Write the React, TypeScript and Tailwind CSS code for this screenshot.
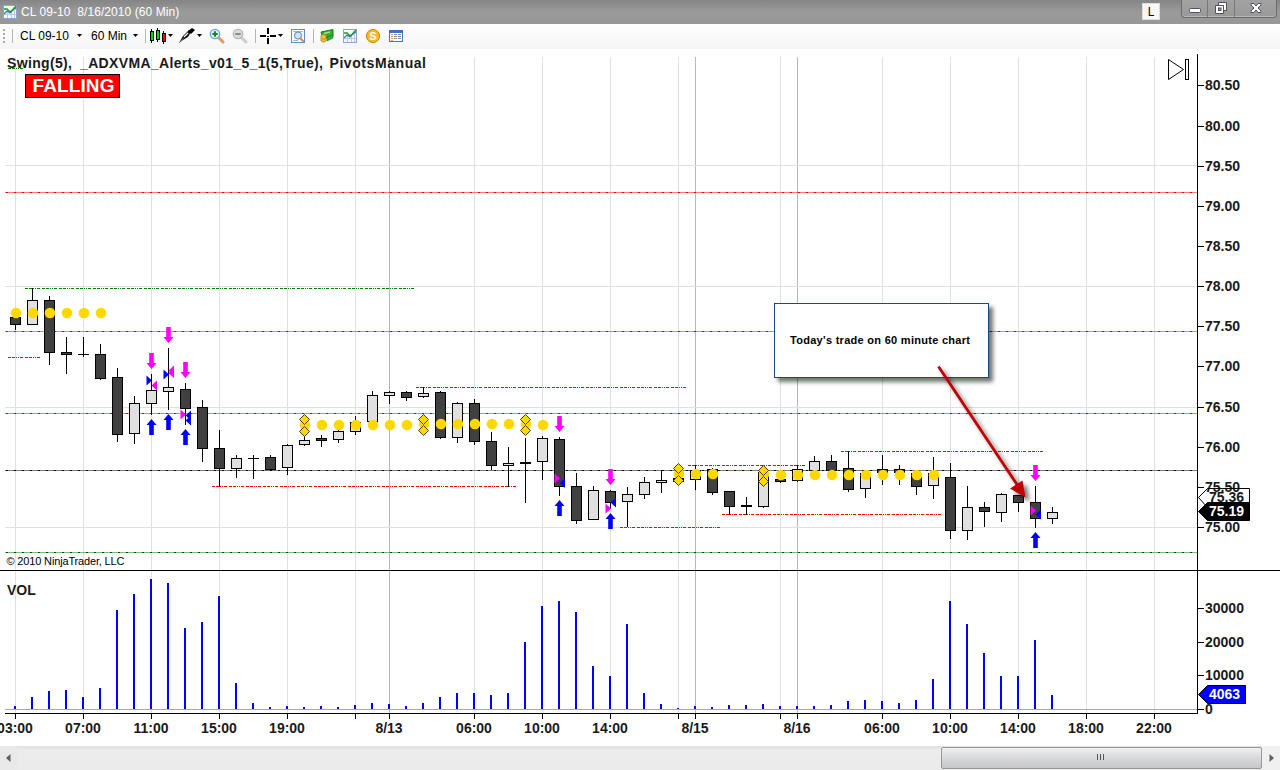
import type { ReactNode } from 'react';

type Bar = [high: number, top: number, bottom: number, low: number, up: 0 | 1, volTop: number];

// one entry per hourly bar, in chart pixels
const bars: Bar[] = [
  [317, 317, 325, 330, 0, 706],
  [288, 300, 325, 325, 1, 697],
  [296, 300, 353, 365, 0, 691],
  [337, 352, 355, 374, 0, 690],
  [337, 354, 355, 357, 0, 697],
  [344, 354, 379, 380, 0, 688],
  [368, 377, 435, 442, 0, 610],
  [396, 403, 434, 444, 1, 594],
  [374, 390, 404, 415, 1, 579],
  [348, 387, 392, 410, 1, 583],
  [383, 389, 409, 425, 0, 628],
  [400, 407, 449, 462, 0, 622],
  [430, 448, 469, 487, 0, 596],
  [455, 458, 469, 478, 1, 683],
  [455, 458, 459, 479, 0, 703],
  [455, 457, 470, 470, 0, 707],
  [444, 445, 468, 475, 1, 706],
  [430, 440, 445, 446, 1, 707],
  [435, 438, 441, 447, 0, 706],
  [430, 431, 440, 443, 1, 707],
  [416, 422, 432, 435, 1, 705],
  [391, 395, 422, 422, 1, 703],
  [391, 392, 396, 404, 1, 704],
  [391, 392, 398, 401, 0, 706],
  [387, 393, 397, 398, 1, 703],
  [391, 392, 438, 439, 0, 697],
  [402, 403, 438, 443, 1, 693],
  [399, 403, 442, 445, 0, 693],
  [432, 441, 466, 470, 0, 695],
  [447, 463, 466, 487, 1, 693],
  [438, 462, 464, 503, 0, 642],
  [436, 438, 462, 480, 1, 606],
  [437, 439, 487, 496, 0, 601],
  [473, 486, 521, 524, 0, 612],
  [486, 490, 520, 520, 1, 666],
  [490, 491, 503, 509, 0, 676],
  [487, 494, 502, 527, 1, 624],
  [477, 482, 495, 499, 1, 693],
  [470, 480, 483, 493, 1, 704],
  [470, 478, 482, 482, 0, 708],
  [465, 470, 480, 490, 1, 706],
  [468, 469, 493, 495, 0, 707],
  [491, 491, 507, 515, 0, 705],
  [497, 505, 507, 515, 0, 705],
  [466, 472, 507, 508, 1, 704],
  [475, 479, 482, 483, 0, 706],
  [465, 469, 481, 482, 1, 706],
  [456, 461, 471, 471, 1, 706],
  [455, 461, 471, 471, 0, 705],
  [451, 468, 490, 492, 0, 701],
  [472, 473, 489, 498, 1, 700],
  [455, 469, 473, 485, 0, 701],
  [465, 469, 473, 485, 0, 703],
  [470, 473, 487, 495, 0, 700],
  [457, 473, 486, 499, 1, 679],
  [463, 477, 531, 539, 0, 601],
  [486, 507, 531, 540, 1, 624],
  [502, 507, 512, 527, 0, 653],
  [493, 494, 513, 522, 1, 676],
  [495, 495, 503, 512, 0, 676],
  [486, 502, 519, 528, 0, 640],
  [507, 512, 519, 524, 1, 695],
];

const barX = (i: number) => 15 + 17 * i;

const timeLabels = [
  { x: 15, text: '03:00' },
  { x: 83, text: '07:00' },
  { x: 151, text: '11:00' },
  { x: 219, text: '15:00' },
  { x: 287, text: '19:00' },
  { x: 355, text: '' },
  { x: 389, text: '8/13', session: true },
  { x: 474, text: '06:00' },
  { x: 542, text: '10:00' },
  { x: 610, text: '14:00' },
  { x: 678, text: '' },
  { x: 695, text: '8/15', session: true },
  { x: 780, text: '' },
  { x: 797, text: '8/16', session: true },
  { x: 882, text: '06:00' },
  { x: 950, text: '10:00' },
  { x: 1018, text: '14:00' },
  { x: 1086, text: '18:00' },
  { x: 1154, text: '22:00' },
];

const prices = [80.5, 80, 79.5, 79, 78.5, 78, 77.5, 77, 76.5, 76, 75.5, 75];
const priceY = (price: number) => Math.round(527 - (price - 75) * 80.3);

const volumes = [
  { y: 608, text: '30000' },
  { y: 642, text: '20000' },
  { y: 675, text: '10000' },
  { y: 709, text: '0' },
];

const pivots = [
  { y: 192, color: '#ff0000', dash: '#ee0000' },
  { y: 331, color: '#ff0000', dash: '#c80000' },
  { y: 413, color: '#ff0000', dash: '#c80000' },
  { y: 470, color: '#000000', dash: '#000000' },
  { y: 552, color: '#008000', dash: '#005000' },
];

const swings = [
  { x1: 8, x2: 24, y: 68, color: '#008000' },
  { x1: 25, x2: 414, y: 288, color: '#008000' },
  { x1: 8, x2: 40, y: 357, color: '#ff0000' },
  { x1: 212, x2: 516, y: 486, color: '#ff0000' },
  { x1: 416, x2: 686, y: 387, color: '#008000' },
  { x1: 620, x2: 720, y: 527, color: '#ff0000' },
  { x1: 688, x2: 805, y: 465, color: '#008000' },
  { x1: 722, x2: 941, y: 514, color: '#ff0000' },
  { x1: 841, x2: 1043, y: 451, color: '#008000' },
];

const dots = [
  { from: 0, to: 5, y: 313 },
  { from: 17, to: 23, y: 425 },
  { from: 24, to: 30, y: 424 },
  { from: 31, to: 31, y: 425 },
  { from: 39, to: 41, y: 474 },
  { from: 44, to: 44, y: 474 },
  { from: 45, to: 54, y: 475 },
];

const diamonds = [
  [17, 419.5],
  [17, 431.5],
  [24, 419.5],
  [24, 430.5],
  [30, 419.5],
  [30, 430.5],
  [39, 468.5],
  [39, 480.5],
  [44, 470.5],
  [44, 481.5],
];

const signals = [
  { bar: 8, down: 353, up: 419 },
  { bar: 9, down: 327, up: 414 },
  { bar: 10, down: 362, up: 429 },
  { bar: 32, down: 416, up: 500 },
  { bar: 35, down: 469, up: 513 },
  { bar: 60, down: 465, up: 532 },
];

const fills = [
  { bar: 8, y: 380.5, side: 'entry', color: '#0000ff' },
  { bar: 8, y: 385.5, side: 'exit', color: '#ff00ff' },
  { bar: 9, y: 374.5, side: 'entry', color: '#0000ff' },
  { bar: 9, y: 370.5, side: 'exit', color: '#ff00ff' },
  { bar: 9, y: 373, side: 'exit', color: '#ff00ff' },
  { bar: 10, y: 414.5, side: 'entry', color: '#ff00ff' },
  { bar: 10, y: 415.5, side: 'exit', color: '#0000ff' },
  { bar: 10, y: 420.5, side: 'exit', color: '#0000ff' },
  { bar: 32, y: 478.5, side: 'entry', color: '#ff00ff' },
  { bar: 32, y: 483, side: 'exit', color: '#0000ff' },
  { bar: 35, y: 508.5, side: 'entry', color: '#ff00ff' },
  { bar: 35, y: 502.5, side: 'exit', color: '#0000ff' },
  { bar: 60, y: 510.5, side: 'entry', color: '#ff00ff' },
  { bar: 60, y: 514.5, side: 'exit', color: '#0000ff' },
];

const Grid = () => (
  <g shapeRendering="crispEdges">
    {timeLabels.map(({ x, session }) => (
      <rect key={x} x={x} y={57} width={1} height={656} fill={session ? '#b8b8b8' : '#e0e0e0'} />
    ))}
    {[165, 286, 407, 527].map(y => (
      <rect key={y} x={5} y={y} width={1192} height={1} fill="#e0e0e0" />
    ))}
  </g>
);

const Levels = () => (
  <g shapeRendering="crispEdges">
    {pivots.map(({ y, color, dash }) => (
      <g key={y}>
        <line x1={5} x2={1197} y1={y + 0.5} y2={y + 0.5} stroke={color} strokeOpacity={0.52} />
        <line x1={6} x2={1197} y1={y + 0.5} y2={y + 0.5} stroke={dash} strokeDasharray="2 6" />
      </g>
    ))}
    {swings.map(({ x1, x2, y, color }) => (
      <line
        key={`${x1}-${y}`}
        x1={x1}
        x2={x2}
        y1={y + 0.5}
        y2={y + 0.5}
        stroke={color}
        strokeDasharray="3 1 3 1 1 1 1 1 3 2"
      />
    ))}
  </g>
);

const Candles = () => (
  <g shapeRendering="crispEdges">
    {bars.map(([high, top, bottom, low, up, volTop], i) => {
      const x = barX(i);
      const height = bottom - top;
      return (
        <g key={i}>
          <rect x={x} y={high} width={1} height={low - high} fill="#000" />
          <rect x={x - 5} y={top} width={11} height={height} fill="#000" />
          {height > 2 && (
            <rect x={x - 4} y={top + 1} width={9} height={height - 2} fill={up ? '#e0e0e0' : '#404040'} />
          )}
          <rect x={x - 1} y={volTop} width={2} height={709 - volTop} fill="#0000ff" />
        </g>
      );
    })}
  </g>
);

const Markers = () => (
  <g>
    {dots.flatMap(({ from, to, y }) =>
      Array.from({ length: to - from + 1 }, (_, k) => (
        <circle key={from + k} cx={barX(from + k) + 1} cy={y} r={5.3} fill="#ffd800" />
      )),
    )}
    {diamonds.map(([bar, y]) => (
      <path
        key={`${bar}-${y}`}
        d="M0 -5L5 0L0 5L-5 0Z"
        transform={`translate(${barX(bar) + 0.5} ${y})`}
        fill="#ffd800"
        stroke="#4d4100"
      />
    ))}
    {fills.map(({ bar, y, side, color }) => (
      <path
        key={`${bar}-${y}`}
        d={side === 'entry' ? 'M-5 -5L0.5 0L-5 5Z' : 'M5.5 -5L0 0L5.5 5Z'}
        transform={`translate(${barX(bar) + 0.5} ${y})`}
        fill={color}
      />
    ))}
    {signals.map(({ bar, down, up }) => (
      <g key={bar}>
        <path
          d="M-2.3 0H2.3V10H5L0 16L-5 10H-2.3Z"
          transform={`translate(${barX(bar) + 0.5} ${down})`}
          fill="#ff00ff"
        />
        <path
          d="M-2.3 16H2.3V6H5L0 0L-5 6H-2.3Z"
          transform={`translate(${barX(bar) + 0.5} ${up})`}
          fill="#0000ff"
        />
      </g>
    ))}
  </g>
);

const Axes = () => (
  <g className="text-[14px] font-bold" fill="#1a1a1a">
    <g shapeRendering="crispEdges" fill="#000">
      <rect x={5} y={709} width={1192} height={1} fill="#a9a9a9" />
      <rect x={0} y={570} width={1280} height={1} />
      <rect x={5} y={713} width={1193} height={1} />
      <rect x={1197} y={54} width={1} height={660} />
      {timeLabels.map(({ x }) => (
        <rect key={x} x={x} y={714} width={1} height={5} />
      ))}
      {prices.map(price => (
        <rect key={price} x={1198} y={priceY(price)} width={6} height={1} />
      ))}
      {volumes.map(({ y }) => (
        <rect key={y} x={1198} y={y} width={6} height={1} />
      ))}
    </g>
    {timeLabels.map(({ x, text }) => (
      <text key={x} x={x} y={733} textAnchor="middle">{text}</text>
    ))}
    {prices.map(price => (
      <text key={price} x={1205} y={priceY(price) + 5}>{price.toFixed(2)}</text>
    ))}
    {volumes.map(({ y, text }) => (
      <text key={y} x={1205} y={y + 5}>{text}</text>
    ))}
    <path d="M1198.5 497.5L1207.5 488.5H1249.5V507.5H1207.5Z" fill="none" stroke="#000" />
    <text x={1209} y={502}>75.36</text>
    <path d="M1198.5 511.5L1207.5 502.5H1249.5V520.5H1207.5Z" fill="#000" stroke="#000" />
    <text x={1209} y={516} fill="#fff">75.19</text>
    <path d="M1198.5 694.5L1207.5 685.5H1245.5V703.5H1207.5Z" fill="#0000ff" stroke="#000" />
    <text x={1209} y={699} fill="#fff">4063</text>
  </g>
);

const Annotations = () => (
  <g>
    <g className="text-[14px] font-bold" fill="#1a1a1a">
      <text x={7} y={68} textLength={65}>Swing(5),</text>
      <text x={80} y={68} textLength={243}>_ADXVMA_Alerts_v01_5_1(5,True),</text>
      <text x={329.5} y={68} textLength={96.5}>PivotsManual</text>
      <text x={7} y={595}>VOL</text>
    </g>
    <rect x={25.5} y={74.5} width={94} height={23} fill="#ff0000" stroke="#000" />
    <text x={32.5} y={92} textLength={82} className="text-[19px] font-bold" fill="#fff">FALLING</text>
    <text x={6.5} y={565} textLength={118} className="text-[11px]" fill="#000">© 2010 NinjaTrader, LLC</text>
    <path d="M1168.5 59.5V79.5L1183.5 69.5Z" fill="#fff" stroke="#000" />
    <rect x={1185.5} y={59.5} width={3} height={20} fill="#fff" stroke="#000" />

    <defs>
      <filter id="shadow" x="-10%" y="-10%" width="130%" height="140%">
        <feDropShadow dx="4" dy="4" stdDeviation="2" floodColor="#000" floodOpacity="0.55" />
      </filter>
    </defs>
    <rect x={774.5} y={303.5} width={214} height={74} fill="#fff" stroke="#1f497d" filter="url(#shadow)" />
    <text x={790} y={344} textLength={180} className="text-[11px] font-bold" fill="#000">
      Today's trade on 60 minute chart
    </text>
    <g filter="url(#shadow)">
      <line x1={938.5} y1={366.5} x2={1018} y2={486} stroke="#c00000" strokeWidth={2.8} />
      <path d="M1010 488.5L1022.5 480.5L1025.5 497.5Z" fill="#c00000" />
    </g>
  </g>
);

const Caret = () => (
  <svg width="5" height="3" viewBox="0 0 5 3" className="shrink-0">
    <path d="M0 0H5L2.5 3Z" fill="#000" />
  </svg>
);

const Separator = () => <div className="h-[14px] w-px shrink-0 bg-[#b5b5b5]" />;

const Icon = ({ children }: { children: ReactNode }) => (
  <svg width="16" height="16" viewBox="0 0 16 16" className="shrink-0">{children}</svg>
);

const ChartIcon = () => (
  <Icon>
    <rect x="1.5" y="1.5" width="13" height="13" fill="#f4f8ff" stroke="#8ea6cf" />
    <path d="M5.5 7V14M9.5 8V14M2 10.5H14M12.5 5V14" stroke="#b9c9e6" />
    <path d="M2 10L5 7L8 9L12 4L14 5" fill="none" stroke="#3f76d4" strokeWidth="1.3" />
    <path d="M2 5L5 5L8 8L11 6L14 2" fill="none" stroke="#25962f" strokeWidth="1.6" />
  </Icon>
);

const ZoomIcon = ({ ring, glass, handle, sign, plus }: Record<'ring' | 'glass' | 'handle' | 'sign', string> & { plus?: boolean }) => (
  <Icon>
    <path d="M9.5 9.5L14 14" stroke={handle} strokeWidth="3" strokeLinecap="round" />
    <circle cx="6" cy="6" r="4.7" fill={glass} stroke={ring} strokeWidth="1.3" />
    <path d={plus ? 'M3.3 6H8.7M6 3.3V8.7' : 'M3.3 6H8.7'} stroke={sign} strokeWidth="2" />
  </Icon>
);

const TitleBar = () => (
  <header className="flex h-6 shrink-0 items-start justify-between bg-linear-to-b from-[#858585] via-[#9a9a9a] to-[#979797] pl-[2px] pr-[3px]">
    <div className="flex h-6 items-center gap-[3px] text-[12px] tracking-[0.07px] text-white">
      <ChartIcon />
      <span className="whitespace-pre">{'CL 09-10  8/16/2010 (60 Min)'}</span>
    </div>
    <div className="flex items-start gap-[21px]">
      <div className="mt-[3px] flex h-[17px] w-[18px] items-center justify-center border border-[#dcdcdc] bg-[#f8f8f8] pt-px text-[12px] text-black">
        L
      </div>
      <div className="flex h-[18px] w-[96px] rounded-b-[4px] border border-t-0 border-[#6a6a6a] bg-linear-to-b from-[#a2a2a2] to-[#999999] shadow-[inset_0_-1px_0_#b8b8b8]">
        <div className="flex w-[26px] items-start justify-center border-r border-[#777777] pt-2">
          <svg width="12" height="6" viewBox="0 0 12 6">
            <rect x=".5" y=".5" width="11" height="4" rx="1" fill="#fff" stroke="#50505f" />
          </svg>
        </div>
        <div className="flex w-[27px] items-start justify-center border-r border-[#777777] pt-[2px]">
          <svg width="12" height="12" viewBox="0 0 12 12">
            <path d="M3.5 .5H11.5V8.5H3.5Z" fill="#fff" stroke="#50505f" />
            <path d="M.5 3.5H8.5V11.5H.5Z" fill="#fff" stroke="#50505f" />
            <rect x="3.5" y="6" width="2.5" height="2.5" fill="#999" stroke="#50505f" />
          </svg>
        </div>
        <div className="flex flex-1 items-start justify-center pt-[3px]">
          <svg width="12" height="10" viewBox="0 0 12 10">
            <path d="M1 .5H4L6 3L8 .5H11V2L8 5L11 8V9.5H8L6 7L4 9.5H1V8L4 5L1 2Z" fill="#fff" stroke="#50505f" />
          </svg>
        </div>
      </div>
    </div>
  </header>
);

const Toolbar = () => (
  <div className="flex h-[25px] shrink-0 items-center rounded-b-[3px] bg-linear-to-b from-white to-[#f5f5f5] pb-[2px] pl-[3px] text-[12px] text-black">
    <svg width="2" height="16" viewBox="0 0 2 16">
      <path d="M1 1V16" stroke="#aaa" strokeWidth="2" strokeDasharray="2 2" />
    </svg>
    <div className="ml-[7px] mr-[7px] flex"><Separator /></div>
    <div className="flex w-[71px] items-center gap-[8px]">
      <span>CL 09-10</span>
      <Caret />
    </div>
    <div className="flex w-[54px] items-center gap-[6px]">
      <span>60 Min</span>
      <Caret />
    </div>
    <Separator />
    <div className="ml-[3px] flex w-[30px] items-center gap-[2px]">
      <svg width="17" height="16" viewBox="0 0 17 16" shapeRendering="crispEdges" className="shrink-0">
        <path d="M2.5 1V15M8.5 0V14M14.5 3V16" stroke="#000" />
        <rect x="1.5" y="3.5" width="3" height="9" fill="#00d800" stroke="#000" />
        <rect x="7.5" y="2.5" width="3" height="9" fill="#00d800" stroke="#000" />
        <rect x="13.5" y="5.5" width="3" height="8" fill="#f00000" stroke="#000" />
      </svg>
      <Caret />
    </div>
    <div className="flex w-[30px] items-center gap-[2px]">
      <Icon>
        <path d="M0 15L4 8L10 2L12 4L9 9L4 12Z" fill="#111" />
        <path d="M9 3L13 0L16 2L12 6Z" fill="#000" />
        <path d="M5 9L9 5" stroke="#eee" strokeWidth="1.2" />
        <path d="M0 15L5 10" stroke="#777" strokeWidth=".8" />
      </Icon>
      <Caret />
    </div>
    <div className="flex items-center gap-[7px]">
      <ZoomIcon ring="#6e9fd6" glass="#dcf2ff" handle="#e59a5c" sign="#108a20" plus />
      <ZoomIcon ring="#b4b4b4" glass="#dcdcdc" handle="#cccccc" sign="#8a8a8a" />
    </div>
    <div className="ml-[7px] mr-1 flex"><Separator /></div>
    <div className="flex w-[30px] items-center gap-[2px]">
      <svg width="16" height="16" viewBox="0 0 16 16" shapeRendering="crispEdges" className="shrink-0">
        <path d="M0 8H6M10 8H16M8 0V6M8 10V16" stroke="#000" strokeWidth="2" />
        <path d="M7 8H9" stroke="#000" strokeWidth="1" />
      </svg>
      <Caret />
    </div>
    <Icon>
      <rect x="1.5" y="1.5" width="13" height="13" fill="#fff" stroke="#5b8bd0" />
      <path d="M3 3.5H13M3 12.5H8" stroke="#9db9e4" />
      <path d="M10 10L14 14" stroke="#d98a4c" strokeWidth="2" />
      <circle cx="8" cy="7.5" r="3.6" fill="#cbe6fb" stroke="#5685c2" />
    </Icon>
    <div className="ml-[7px] mr-[5px] flex"><Separator /></div>
    <div className="flex items-center gap-[7px]">
      <Icon>
        <path d="M2 4L14 1.5V8L4 11Z" fill="#2fae2f" stroke="#177a1b" />
        <path d="M5 5.5L11 4" stroke="#a6e58a" strokeWidth="1.6" />
        <path d="M8 9L14 7V10L8 13Z" fill="#2fae2f" stroke="#177a1b" strokeWidth=".6" />
        <path d="M2 7.5Q4.5 5.5 7 7.5V13Q4.5 15.5 2 13Z" fill="#f4c33a" stroke="#b5801a" strokeWidth=".8" />
        <path d="M2.5 10.5Q4.5 12 6.5 10.5" fill="none" stroke="#b5801a" strokeWidth=".8" />
      </Icon>
      <ChartIcon />
      <Icon>
        <circle cx="8" cy="8" r="6.6" fill="#f5b921" stroke="#c98a0c" />
        <text x="8" y="12" textAnchor="middle" className="text-[11px] font-bold" fill="#fff">S</text>
      </Icon>
      <Icon>
        <rect x="1.5" y="2.5" width="13" height="11" fill="#fff" stroke="#4a74bd" />
        <rect x="1" y="2" width="14" height="3" fill="#3f6fc4" />
        <path d="M3 6.5H5M3 8.5H5M3 10.5H5M3 12.5H5" stroke="#e0a53a" />
        <path d="M6 6.5H9M6 8.5H9M6 10.5H9M10 6.5H13M10 8.5H13M10 10.5H13" stroke="#7d8db0" />
      </Icon>
    </div>
  </div>
);

const ScrollBar = () => (
  <footer className="flex h-6 shrink-0 items-center bg-linear-to-b from-[#e0e0e0] via-[#ececec] via-20% to-[#ebebeb]">
    <div className="flex h-full w-[17px] items-center justify-center bg-[#e9e9e9]">
      <svg width="5" height="8" viewBox="0 0 5 8"><path d="M4.5 0V8L0 4Z" fill="#606060" /></svg>
    </div>
    <div className="flex h-full flex-1 items-center justify-end">
      <div className="flex h-[22px] w-[321px] items-center justify-center gap-[2px] rounded-[2px] border border-[#979797] bg-linear-to-b from-[#f0f0f0] via-[#d9d9dc] via-50% to-[#c6c7ca] pb-[2px] pr-[2px]">
        <div className="h-[6px] w-px bg-[#555555]" />
        <div className="h-[6px] w-px bg-[#555555]" />
        <div className="h-[6px] w-px bg-[#555555]" />
      </div>
    </div>
    <div className="flex h-full w-[18px] items-center justify-center bg-[#f0f0f0]">
      <svg width="5" height="8" viewBox="0 0 5 8"><path d="M.5 0V8L5 4Z" fill="#606060" /></svg>
    </div>
  </footer>
);

export default function App() {
  return (
    <div className="flex h-[770px] w-[1280px] flex-col overflow-hidden bg-white font-['Liberation_Sans',Arial,sans-serif]">
      <TitleBar />
      <Toolbar />
      <svg width="1280" height="697" viewBox="0 49 1280 697" className="block shrink-0">
        <Grid />
        <Levels />
        <Candles />
        <Markers />
        <Axes />
        <Annotations />
      </svg>
      <ScrollBar />
    </div>
  );
}
